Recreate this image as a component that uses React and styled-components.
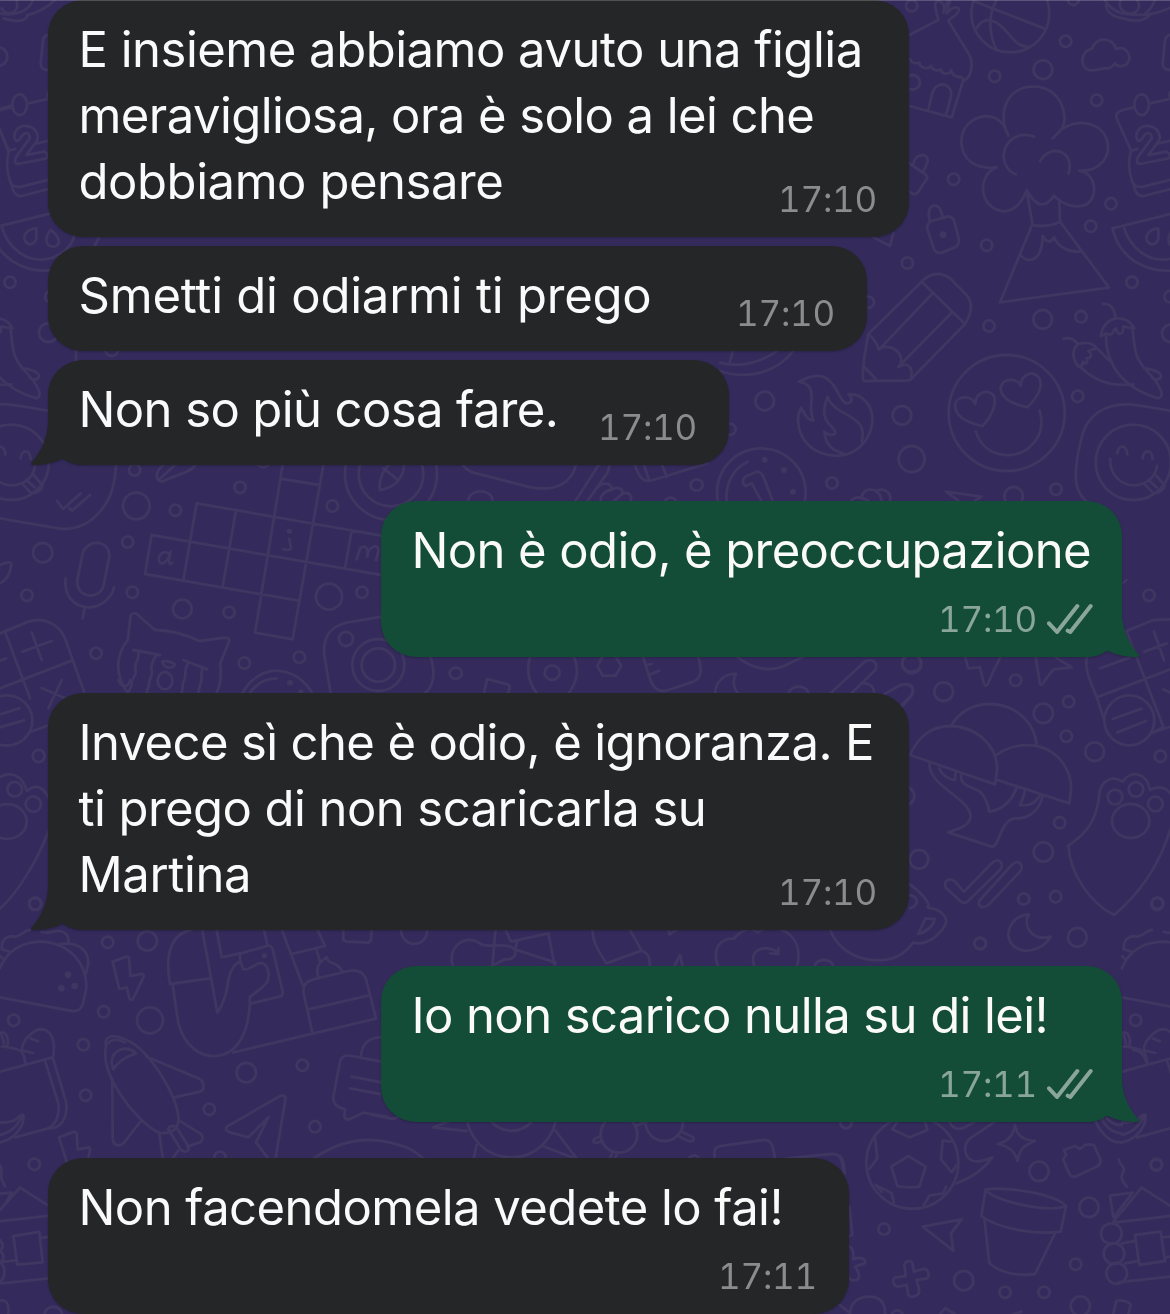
import React from 'react'
import styled, { createGlobalStyle } from 'styled-components'

const GlobalStyle = createGlobalStyle`
    body {
        margin: 0;
        background: #342b5c;
    }
`

const Screen = styled.main`
    position: relative;
    width: 1170px;
    height: 1314px;
    overflow: hidden;
    background: #342b5c;
    font-family: Inter, "Liberation Sans", sans-serif;
`

const Wallpaper = styled.svg`
    position: absolute;
    inset: 0;
    fill: none;
    stroke: #3f3661;
    stroke-width: 2.8px;
    stroke-linecap: round;
    stroke-linejoin: round;
    path, ellipse {
        vector-effect: non-scaling-stroke;
    }
    .dot {
        fill: #3f3661;
        stroke: none;
    }
`

const TopEdge = styled.div`
    position: absolute;
    top: 0;
    left: 0;
    right: 0;
    height: 1px;
    background: rgba(255, 255, 255, 0.2);
`

const Thread = styled.section`
    position: relative;
    display: flex;
    flex-direction: column;
    padding: 0 48px;
`

const Bubble = styled.article`
    position: relative;
    box-sizing: border-box;
    display: flex;
    flex-direction: ${p => p.$stacked ? 'column' : 'row'};
    justify-content: space-between;
    align-self: ${p => p.$mine ? 'flex-end' : 'flex-start'};
    width: ${p => p.$width}px;
    height: ${p => p.$stacked ? 156 : 39 + 66 * p.$rows}px;
    margin-top: ${p => p.$gap}px;
    padding: 17px 30px 0 30.5px;
    padding-bottom: ${p => p.$stacked ? 15 : 22}px;
    border-radius: 35px;
    background: ${p => p.$mine ? '#144d37' : '#242627'};
    color: #fafafa;
    filter: drop-shadow(0 1px 1px rgba(0, 0, 0, 0.22));
`

const Tail = styled.svg`
    position: absolute;
    z-index: -1;
    bottom: 0;
    width: 54px;
    height: 44px;
    ${p => p.$mine ? 'right: -18px; transform: scaleX(-1);' : 'left: -18px;'}
    fill: ${p => p.$mine ? '#144d37' : '#242627'};
`

const Message = styled.p`
    flex: 1;
    min-width: 0;
    margin: 0;
    font-size: 49px;
    line-height: 66px;
    white-space: nowrap;
`

const Line = styled.span`
    display: block;
    letter-spacing: ${p => p.$tracking}px;
`

const Meta = styled.div`
    display: flex;
    align-items: center;
    align-self: flex-end;
    gap: 10px;
    width: max-content;
    height: 30px;
    margin-right: ${p => p.$mine ? -1 : 2}px;
    margin-bottom: ${p => p.$stacked ? 8 : 1}px;
    color: ${p => p.$mine ? '#89a699' : '#8b8c8d'};
    svg {
        width: 46px;
        height: 31px;
        margin-top: -2px;
        fill: none;
        stroke: currentColor;
        stroke-width: 12;
        stroke-linecap: round;
        stroke-linejoin: round;
    }
`

const Time = styled.time`
    font-size: 35px;
    line-height: 30px;
    letter-spacing: -0.25px;
    font-variant-numeric: tabular-nums;
`

// calendar, phone and melon, drawn on both sides of the seam
const calendar = {
    x: 850, y: 0, sx: 1 / 3, sy: 1 / 3,
    d: `M975 102C950 105 945 110 944 130L938 190C938 205 945 210 960 210
        M967 295L900 310M850 322L820 330C800 335 795 345 802 360L843 452C835 480 835 510 845 540C850 560 865 562 880 560L990 532M843 452L862 447M920 432L990 415M850 550C855 580 865 590 880 588L990 560
        M862 420C852 400 870 375 895 378C925 380 935 410 925 425L895 465L950 455C960 460 962 470 955 475L870 492C860 490 858 480 865 470L905 415C905 395 890 395 880 410C875 422 865 425 862 420Z
        M990 635L787 685C810 780 890 812 950 812C1020 812 1095 770 1115 705M820 677C840 750 900 785 950 778C1000 772 1030 740 1040 705
        M925 685C905 685 885 700 890 720C900 740 920 735 925 715ZM968 690C998 710 1000 740 975 740C950 738 950 710 968 690
        M968 270C955 275 955 295 968 300`,
    rings: [[875, 314, 22, 31]]
}

// chillies and the sticker face, also repeated across the seam
const chilli = {
    x: 720, y: 250, sx: 1 / 3, sy: 1 / 3,
    d: `M1031 266C1060 260 1065 275 1075 282C1100 275 1120 280 1130 295C1150 310 1160 330 1175 335M1075 282C1050 300 1060 340 1082 353L1090 335C1095 345 1105 340 1100 325C1115 325 1118 312 1105 303L1130 295M1085 353C1120 390 1170 410 1240 403
        M1148 162C1180 160 1185 190 1186 205M1143 258C1145 225 1170 205 1195 205C1220 205 1235 220 1243 235L1210 230C1210 255 1195 260 1188 235C1178 240 1180 262 1160 250ZM1158 260C1160 340 1200 410 1315 445C1335 440 1325 410 1280 362C1240 320 1245 290 1238 240M1272 355C1300 355 1325 370 1323 380C1318 392 1300 390 1295 382
        M1400 492C1340 480 1290 470 1230 463C1150 460 1095 500 1083 570C1070 620 1060 690 1075 720C1085 745 1100 755 1120 770
        M1192 610C1195 580 1220 585 1222 613M1268 625C1270 598 1295 595 1298 627M1171 627C1168 670 1200 705 1240 706C1280 705 1308 680 1311 647M1272 700L1298 728C1315 735 1335 715 1333 705L1303 670M1285 690L1310 712`,
    rings: [[1240, 637, 113]]
}

// taco, bolt, rocket, plane, phone call, cake
const rocket = {
    x: 0, y: 900, sx: 1 / 3, sy: 1 / 3,
    d: `M0 205C20 150 70 125 125 125C215 130 265 200 258 270L250 305C245 330 230 335 215 333L0 292M5 145C5 115 25 105 45 110C60 110 75 90 90 90M125 95C145 105 160 90 180 93C200 97 207 110 205 127M180 132C235 125 265 150 265 190L258 220M5 148L28 155M0 168L10 178
        M338 185L380 170C388 170 388 175 388 185L391 228L425 222C432 222 432 228 430 232L400 295C395 303 388 300 387 290L380 262L358 267Z
        M200 785L177 712L223 695L230 700L233 748L268 742C273 745 270 750 265 775
        M0 515L158 472C162 470 160 455 162 440C160 390 125 375 95 400C75 415 65 435 65 455C75 470 75 480 75 487M65 455C45 440 25 445 10 438M92 415L114 424M68 452L100 459M135 482L175 610C180 650 165 675 145 685L45 712M158 472L198 605C205 650 185 675 165 683L145 686M0 727C40 720 75 680 70 645C60 640 55 655 45 660C30 668 15 668 0 668M0 705C40 695 55 670 66 650M0 400C20 385 30 430 20 440L5 440M5 405L12 430
        M318 440C310 400 350 405 380 420C450 450 540 600 535 660C535 690 510 700 480 700C400 660 300 520 318 440M335 490C335 445 380 435 408 460C375 470 350 490 340 508ZM325 430C335 415 360 418 375 428M440 470L595 535C615 545 615 570 600 575L520 593M337 535L338 715C340 740 360 740 372 728L425 660M535 660L600 700C610 705 610 720 600 727L562 740M505 688L540 745C550 762 570 755 565 738L528 680C515 675 505 680 505 688M478 702L488 772M535 752L520 772
        M680 680L840 588C855 583 858 590 855 605L825 785M680 680C675 690 680 693 690 697L745 712L805 652L768 727L812 785
        M510 252C495 170 510 100 575 90M510 252L630 235M605 80L652 338C665 320 680 290 685 240C690 210 705 190 720 185M518 255L535 370C555 440 600 470 645 468C710 465 750 400 750 290C790 260 812 250 805 215C800 190 785 185 770 193C750 205 735 212 730 207C722 190 718 170 722 160L805 137C812 135 815 140 818 148L848 275C850 285 845 288 838 290L755 310M648 80L665 172L720 160M790 80L802 135
        M700 457L1128 356L1100 245C1092 215 1070 207 1045 213L940 238C915 245 905 260 912 285L937 398M925 328L1108 286M955 232C945 200 960 185 980 172C985 185 985 185 1000 190C1015 195 1022 205 1028 215M842 80L912 265M875 162L975 138L948 80M950 150L960 185M1030 80L1030 120L1040 125L1105 128L1113 120L1115 80
        M1145 485L1050 467C1030 465 1022 475 1020 485L1000 590C998 610 1010 622 1035 628L1033 650C1038 662 1045 660 1055 655L1090 638L1160 650M1055 530L1145 547M1050 565L1140 582M1083 468C1085 430 1110 412 1145 412
        M935 780C1010 725 1080 715 1140 722C1210 735 1240 745 1280 785`,
    rings: [[105, 12, 18], [323, 127, 17], [442, 123, 29], [311, 335, 17], [41, 361, 17], [450, 361, 39], [250, 434, 17], [257, 586, 17], [739, 518, 29], [907, 496, 17], [628, 628, 17], [945, 680, 17], [660, 772, 17], [103, 793, 17]],
    dots: [[204, 224, 10], [184, 265, 10], [224, 258, 10], [793, 167, 8]]
}

const doodles = [
    calendar,
    { ...calendar, x: calendar.x - 1122 },
    chilli,
    { ...chilli, x: chilli.x - 1122 },
    rocket,
    { ...rocket, x: 1122 },
    // tree, volcano, house, ball
    {
        x: 850, y: 0, sx: 1 / 3, sy: 1 / 3,
        d: `M375 5L582 85M440 0C410 50 420 110 440 150M380 85C400 50 430 55 460 85C490 115 500 140 535 140
            M178 105L265 60C255 20 250 5 265 3C280 5 285 15 280 38C290 5 300 -10 300 3L290 40C310 15 330 20 326 32C320 50 300 55 295 62L355 160C372 185 365 230 345 240C335 235 330 225 332 232C320 230 305 228 303 210C300 225 275 225 273 208C265 215 245 210 243 198C235 210 210 205 208 188C200 192 185 190 180 178M340 240L305 352L178 318M235 330L248 275C262 240 310 250 303 290L288 345
            M765 0C775 20 800 40 830 42C880 48 910 45 965 22M768 15C770 40 790 50 820 56C850 65 880 65 900 45M812 0C800 30 830 40 840 40C865 40 875 15 860 0M915 0C905 20 895 35 885 42
            M765 205C750 205 735 215 715 210C690 200 690 155 727 145C735 110 790 110 798 147C830 135 845 170 835 185C825 205 800 200 795 190C785 205 775 205 765 205
            M475 407C440 340 470 258 553 260C630 262 660 345 635 388L608 415M635 388C690 350 770 370 774 440C774 490 730 515 687 512C740 520 745 590 710 613C680 628 640 615 612 587C600 605 585 615 570 613C550 605 535 580 530 570C520 600 495 635 460 634C385 625 380 525 440 502C380 510 335 480 334 425C335 365 390 340 430 352C455 360 465 380 475 407M552 410C490 385 440 450 470 500C478 515 488 520 498 523M570 484C600 430 675 450 656 520
            M530 572L548 675C575 680 600 680 630 665L628 605M545 678L450 907L777 863L630 665M512 765C530 790 560 780 570 755C578 735 578 720 578 708C585 722 600 735 612 712C625 740 650 755 690 755
            M233 690C228 675 235 668 245 663L290 650C300 648 308 652 312 662L327 718C328 730 322 738 315 742L275 758C262 760 256 755 252 748ZM240 665C225 610 265 605 273 635L280 655
            M178 490L225 522C235 530 232 535 228 540L205 575C198 585 190 585 178 575M190 492C195 460 235 455 233 485L220 515
            M70 712L120 738L130 700`,
        rings: [[481, 40, 117], [188, 247, 22], [185, 17, 17], [670, -2, 17], [647, 124, 17], [434, 229, 17], [579, 209, 28], [740, 301, 17], [311, 538, 17], [783, 611, 17], [722, 679, 17], [410, 736, 17], [172, 789, 17], [846, 847, 17]],
        dots: [[279, 704, 10]]
    },
    // pencil, flame, heart eyes, coin
    {
        x: 720, y: 250, sx: 1 / 3, sy: 1 / 3,
        d: `M432 393C425 390 430 330 445 252L605 95C630 70 660 65 690 85L740 135C760 160 755 190 735 222L580 380C575 390 570 392 560 392ZM605 95L735 222M638 130L478 298M695 188L535 350M445 252C460 265 475 285 475 298C510 275 560 310 538 350C560 335 580 350 573 380M432 350L470 390
            M237 395C300 360 330 380 355 430C370 460 380 465 393 455C397 440 390 435 385 433C430 430 460 470 457 515C450 580 400 620 345 617C280 615 235 570 234 510C234 495 240 480 243 473C255 495 262 510 280 512C262 470 285 440 270 415C262 400 250 398 237 395M425 575C440 520 400 505 365 485C340 470 325 455 323 440C308 480 310 500 325 520C345 540 350 548 343 552C330 560 320 550 313 545C315 570 325 600 370 610
            M787 528C740 518 705 500 705 465C710 435 755 435 766 462C765 430 800 415 820 435C835 460 810 505 787 528M922 472C870 460 840 440 842 412C850 380 895 385 902 408C902 375 935 360 955 380C975 405 950 445 922 472M768 545C790 620 880 635 930 590C965 560 970 520 959 482
            M83 635C40 655 15 700 20 755M110 665L75 680C65 690 68 705 78 708L95 700L125 755M110 665C120 663 125 670 130 680L157 750
            M0 338C60 355 130 335 175 300M0 363C80 390 170 370 222 300M40 300L30 335
            M395 750C410 735 430 745 445 752M425 742C430 715 460 710 480 735L485 752M470 722C500 710 515 735 510 752M678 725L785 740L765 752M678 725L715 752`,
        rings: [[860, 489, 174], [124, 728, 133], [807, 228, 17], [968, 208, 28], [1083, 200, 17], [1236, 97, 17], [134, 453, 28], [546, 496, 28], [1073, 439, 17], [575, 627, 39], [336, 699, 17], [881, 739, 28], [1008, 718, 17], [445, 157, 17], [30, 538, 17], [1352, 250, 26], [1350, 140, 17]],
        dots: [[134, 629, 9], [192, 660, 9], [219, 725, 9]]
    },
    // crossword, microphone, crying cat, camera
    {
        x: 0, y: 440, sx: 1 / 3, sy: 1 / 3,
        d: `M348 75C345 130 335 175 300 215C270 250 230 270 180 266L0 235M172 183L189 207L242 160M208 205L216 212L270 165
            M490 75C465 95 465 120 485 125L560 95C575 88 580 85 585 75M478 118L525 75
            M590 190L1145 287M590 190L550 420M455 285L1145 405M455 285L435 402L895 482M708 210L668 440M848 75L765 578L878 598L970 75M848 117L958 135M1055 272L1035 385
            M510 345C495 325 470 345 478 365C485 378 505 365 512 335C505 360 505 380 517 368M868 297L873 325C870 332 860 330 850 327M1070 358L1080 325C1095 315 1105 320 1102 350C1105 315 1140 310 1135 335L1128 360
            M246 350C252 295 330 295 328 350L312 430C305 485 225 475 232 420ZM197 415C190 470 225 500 265 502C300 503 335 475 342 442M254 505L248 535
            M0 375C15 368 30 365 33 370C35 395 20 420 0 430
            M0 580L85 545C130 530 175 550 195 595L252 755M15 575L90 775M0 745L215 662M95 577L125 660M68 635L155 603M0 662L18 655
            M380 755C345 700 345 650 383 600L392 528C395 518 405 518 410 522L465 570C520 570 560 585 598 603L675 593C688 593 690 600 685 610L660 672C665 700 662 735 650 758M400 630L480 645M415 640C420 660 400 665 407 690C412 710 390 715 395 735L385 758M468 645C460 665 450 670 455 690C460 710 445 715 447 735L440 758M550 660L622 688M565 668C550 690 560 700 553 720C545 730 550 745 545 758M607 688C600 710 610 715 600 735L595 758M487 665C500 660 525 670 525 675C515 688 490 685 487 665
            M725 765C750 710 800 692 830 692C880 695 915 720 940 765M750 758C770 730 800 715 830 715
            M1170 505L1145 530L1040 548C990 560 970 590 972 640L992 760`,
        rings: [[495, 722, 22, 26], [1135, 675, 78], [1135, 675, 50], [1173, 102, 138], [1173, 102, 97], [404, 90, 17], [720, 142, 17], [409, 198, 40], [526, 211, 17], [383, 306, 17], [128, 338, 29], [81, 466, 17], [397, 457, 17], [547, 507, 28], [687, 517, 17], [997, 198, 17], [987, 470, 39], [1086, 457, 17], [288, 640, 17], [733, 669, 17], [898, 652, 17], [1038, 597, 21], [790, 62, 20]],
        dots: [[868, 274, 8], [870, 728, 9], [903, 756, 8]]
    },
    // strip above the first reply
    {
        x: 370, y: 420, sx: 1 / 2.489, sy: 1 / 3,
        d: `M25 210C20 180 35 145 52 130M25 210C55 205 85 180 85 130M33 145L68 178M228 130C240 150 250 158 275 163L400 202C460 215 505 190 513 130M510 245L572 130M540 245L590 160C597 145 595 140 595 130M560 210C580 180 605 190 600 210C620 195 635 210 625 225C640 210 655 225 648 245M575 245C570 225 590 210 600 210M605 245L625 225M658 130C670 175 680 190 705 180L840 130M680 130L695 180M726 130L738 170`,
        rings: [[275, 240, 30, 26], [813, 195, 15, 17], [748, 250, 15, 17]]
    },
    // strip under the first reply
    {
        x: 370, y: 640, sx: 1 / 2.8, sy: 1 / 3,
        d: `M168 45C185 100 180 140 150 163M450 45C435 90 445 130 469 163M568 45C590 90 578 130 554 163M654 45L636 78L652 107L688 107L703 78L686 45M763 45L785 120C795 150 815 158 835 150L905 125C930 112 930 90 918 45M775 75L788 72M785 103L810 92M1022 45C1070 90 1120 95 1160 78L1222 45M967 163C965 130 990 100 1025 102C1015 120 1015 145 1034 163M1286 163L1385 65C1405 52 1425 70 1415 90L1345 163M1375 130C1400 125 1413 145 1412 163M1440 163L1480 138C1510 125 1530 145 1515 170L1485 205M318 165L328 117L385 133C395 138 390 145 385 165`,
        rings: [[240, 100, 17, 17], [510, 98, 21, 22], [1200, 160, 27, 20], [1517, 72, 27, 28]]
    },
    // mushrooms, ticks, paw, chocolate
    {
        x: 900, y: 580, sx: 1 / 3, sy: 1 / 3,
        d: `M195 230L205 265L240 262C245 280 250 315 257 318C265 318 265 300 302 230M407 230L420 312C425 318 430 312 432 305L460 268L515 262C515 258 480 245 466 230M0 315C40 305 50 330 25 355L0 380
            M30 525C60 460 100 440 150 438C230 440 300 500 290 580L285 613ZM155 435C185 385 230 372 275 372C350 375 405 430 410 495M285 527C330 495 370 492 405 497C480 510 520 580 512 640L508 670L292 600M88 552C90 620 200 650 212 705C213 735 180 745 145 757L275 800C300 800 300 720 345 715C385 718 420 690 428 648M183 585C180 620 220 620 240 635C260 655 265 675 267 695C305 690 335 665 350 622M118 565C125 585 145 598 165 600L167 575M375 630C372 650 365 665 360 675C390 680 410 665 420 645
            M135 915C135 895 155 895 165 905L192 935L275 850C295 830 315 850 300 870L205 962C195 972 188 970 180 962L145 930C137 925 135 920 135 915M240 960L335 855C355 835 375 855 360 875L265 975C245 990 230 975 240 960
            M505 797C560 760 590 720 597 650C600 600 635 585 668 605C690 570 740 575 750 630C775 615 800 625 812 640M505 797C510 880 570 970 642 1005C720 940 780 850 812 745
            M675 155L760 120L812 118M680 155L790 440L760 458M812 440L757 458M560 232C555 270 565 290 590 350L612 418M590 352L812 268M733 215L800 190M762 155L792 242M600 265L690 232M790 328L812 338M638 417L725 386M652 457L738 423M665 12L680 0
            M325 1060C330 1020 360 1005 387 1003C365 1040 400 1085 452 1070C435 1100 400 1115 370 1112C340 1105 325 1085 325 1060
            M28 945C55 950 60 975 30 985M28 912C60 935 85 960 88 985`,
        rings: [[688, 421, 75], [645, 651, 22], [708, 628, 22], [766, 672, 22], [692, 723, 56, 51], [747, 46, 17], [347, 301, 17], [35, 248, 28], [131, 335, 28], [506, 365, 17], [430, 400, 29], [499, 469, 17], [584, 515, 28], [781, 529, 17], [479, 728, 17], [430, 816, 29], [57, 838, 28], [15, 648, 28], [371, 957, 17], [467, 950, 17], [773, 970, 17], [532, 1072, 28], [240, 1091, 17]]
    },
    // strip above the second reply
    {
        x: 370, y: 900, sx: 1 / 2.412, sy: 1 / 3,
        d: `M75 85C72 145 140 150 138 85M200 200C185 140 230 100 265 130C280 145 310 130 340 140C360 155 350 180 325 178L290 200M303 85L295 200M325 85L340 125L430 100L446 200M355 125L350 148L448 188M537 85C535 120 545 140 570 190L655 152L625 85M655 152C672 160 675 175 675 200M720 85L722 103L740 90M733 200L748 165L754 200M840 200C825 150 840 115 880 115C885 100 900 92 915 85L935 97L950 85M985 85C1030 105 1040 150 1030 200M927 200C915 155 940 135 975 150L985 160M985 145L985 162L965 160
            M1108 85C1130 160 1190 190 1250 178C1280 172 1300 145 1310 128C1350 140 1385 90 1390 65C1388 40 1370 27 1345 22M1340 55L1362 57C1360 75 1345 95 1322 102Z`,
        rings: [[1095, 198, 22, 18], [1472, 130, 14, 17]]
    },
    // strip under the second reply
    {
        x: 370, y: 1105, sx: 1 / 3, sy: 1 / 3,
        d: `M0 28L60 40C75 42 80 40 85 35M360 45C395 88 455 88 490 45M290 78L190 67L245 45M320 120L310 165M555 75L622 163L518 123M797 62L832 50M693 95C665 100 665 115 680 113L698 110M935 80L970 97C975 108 965 110 955 108L922 92M728 140L718 165M742 142L733 165M1035 165C1030 130 1035 125 1060 122L1180 105C1205 105 1210 120 1215 165M1250 160L1385 147C1415 145 1418 170 1422 215M1410 45C1410 78 1448 78 1447 45`,
        rings: [[424, 22, 135], [747, 88, 55], [883, 52, 56], [972, 168, 17]]
    },
    // football, flower pot, cabin
    {
        x: 840, y: 1050, sx: 1 / 3, sy: 1 / 3,
        d: `M205 318L257 350L238 410Q205 415 172 408L154 350ZM172 215L157 238L208 262L262 240L255 215M332 275L308 272L303 328L335 367L350 345M105 265L112 325L88 357M107 405L155 430L162 458M107 405L125 425M318 410L310 430L268 437L250 468
            M328 212C335 240 360 240 375 232L410 212M470 212L390 265C365 290 375 325 400 333C420 338 440 328 457 322C430 360 390 385 350 400
            M525 225C530 255 545 270 585 273C550 285 538 300 533 333C525 305 510 290 473 282C505 275 520 255 525 225Z
            M672 300L705 288L720 297L735 285L750 283C765 283 765 290 768 300L782 330C783 340 778 345 770 350L705 380C692 382 688 375 685 365L670 330C668 322 678 318 678 315Z
            M437 418C500 410 640 430 678 468C620 490 450 450 437 418L424 498C480 540 600 555 662 545L678 468M433 505L448 640C475 665 530 680 585 672L645 550
            M248 530L365 508L333 550L340 602Z
            M193 645C195 632 215 630 217 640L222 665L250 657C265 655 270 675 262 685L230 690L238 722C238 740 210 745 205 735L200 705L175 710C160 710 155 690 165 683L197 678Z
            M28 590C40 595 42 610 40 628C60 620 80 625 74 640L45 650C60 670 60 690 48 690C38 692 35 692 28 685M28 470L37 555L28 558M0 318C10 330 12 340 14 370
            M30 792C30 755 60 738 95 740C125 745 135 760 135 792M0 765L30 790M300 792L315 775L345 792M520 792L545 785M820 792L828 755C835 748 865 752 872 765L865 792
            M837 328C835 345 860 350 850 365C840 380 845 390 860 410M820 502L810 437L878 428ZM820 515L905 413L995 470M820 518L990 498M845 580L885 573M855 640L895 633M835 697L990 680M885 555L962 545L975 633L898 645ZM970 562L990 560M975 622L990 620
            M765 210C785 260 820 280 846 277M785 205C800 240 830 250 846 250M800 205C820 225 830 225 846 225M847 65L870 58M880 0C905 0 915 20 920 38`,
        rings: [[217, 338, 138], [18, 218, 17], [597, 364, 29], [949, 345, 17], [747, 472, 29], [132, 537, 17], [707, 643, 17], [371, 692, 29], [495, 727, 17], [612, 727, 17], [721, 768, 29], [814, 551, 31], [822, 611, 31], [830, 670, 31], [172, 798, 17]]
    },
    // left margin, lower half
    {
        x: 0, y: 680, sx: 1 / 3, sy: 1 / 2.473,
        d: `M0 1200C10 1210 0 1225 5 1235L15 1252M0 1310L60 1255L145 1300M0 1338L145 1325M40 1375L118 1365L128 1440L52 1446ZM122 1380L145 1377M0 1385C10 1395 10 1405 0 1412C15 1420 12 1435 0 1440C18 1450 18 1475 0 1490M0 1440L45 1435M5 1492L145 1480M0 1535C20 1530 28 1545 25 1568M0 1270L35 1268L20 1290
            M0 85L58 70M0 117L72 100M92 128L145 112M125 20L195 45M185 0L145 70M355 0C365 20 385 20 390 0
            M0 240C30 225 70 235 80 275C105 255 130 265 145 290M145 375C110 450 50 530 0 565`,
        rings: [[20, 100, 77, 62], [116, 188, 18, 15], [44, 270, 22, 18], [100, 307, 23, 19], [22, 350, 58, 43], [106, 553, 18, 15], [160, 1570, 26, 20]]
    },
    // left margin, upper half
    {
        x: 0, y: 0, sx: 1 / 3, sy: 1 / 3,
        d: `M0 40C50 50 90 30 98 0M10 55C60 70 80 60 82 45M85 45C120 35 150 15 165 0M0 327L33 317M0 390L25 455M228 1050L228 1085M5 25C15 45 45 45 52 20L50 0`,
        rings: [[-6, 170, 28], [30, 847, 17], [152, 890, 17], [145, 998, 28], [335, 1048, 20]]
    }
]

const Doodle = ({ x, y, sx, sy, d, rings = [], dots = [] }) => (
    <g transform={`translate(${x} ${y}) scale(${sx} ${sy})`}>
        <path d={d} />
        {rings.map(([cx, cy, rx, ry = rx], i) => <ellipse key={i} cx={cx} cy={cy} rx={rx} ry={ry} />)}
        {dots.map(([cx, cy, r], i) => <circle className="dot" key={i} cx={cx} cy={cy} r={r} />)}
    </g>
)

// each line carries its own tracking
const messages = [
    {
        width: 861, gap: 0, time: '17:10',
        lines: [['E insieme abbiamo avuto una figlia', -0.5], ['meravigliosa, ora è solo a lei che', -0.57], ['dobbiamo pensare', -0.44]]
    },
    { width: 819, gap: 9, time: '17:10', lines: [['Smetti di odiarmi ti prego', -0.23]] },
    { width: 681, gap: 9, time: '17:10', tail: true, lines: [['Non so più cosa fare.', -0.6]] },
    { width: 741, gap: 36, time: '17:10', mine: true, tail: true, stacked: true, lines: [['Non è odio, è preoccupazione', -0.61]] },
    {
        width: 861, gap: 36, time: '17:10', tail: true,
        lines: [['Invece sì che è odio, è ignoranza. E', -0.63], ['ti prego di non scaricarla su', -0.56], ['Martina', -0.4]]
    },
    { width: 741, gap: 36, time: '17:11', mine: true, tail: true, stacked: true, lines: [['Io non scarico nulla su di lei!', -0.6]] },
    { width: 801, gap: 36, time: '17:11', stacked: true, lines: [['Non facendomela vedete lo fai!', -0.55]] }
]

const ReadMark = () => (
    <svg viewBox="440 66 138 93">
        <path d="M446 127L470 153L531 75M502 149L510 153L571 75" />
    </svg>
)

const ChatBubble = ({ width, gap, mine, tail, stacked, lines, time }) => (
    <Bubble $width={width} $gap={gap} $mine={mine} $stacked={stacked} $rows={lines.length}>
        {tail && (
            <Tail $mine={mine} viewBox="0 0 54 44">
                <path d="M18 0C18 17 11 31 1.5 41.5C0.5 43 1 44 3 44C14 44 24 42 33 37.5C39 42 46 44 54 44V0Z" />
            </Tail>
        )}
        <Message>
            {lines.map(([text, tracking]) => <Line key={text} $tracking={tracking}>{text}</Line>)}
        </Message>
        <Meta $mine={mine} $stacked={stacked}>
            <Time>{time}</Time>
            {mine && <ReadMark />}
        </Meta>
    </Bubble>
)

const App = () => (
    <Screen>
        <GlobalStyle />
        <Wallpaper width="1170" height="1314">
            {doodles.map((doodle, i) => <Doodle key={i} {...doodle} />)}
        </Wallpaper>
        <Thread>
            {messages.map((message, i) => <ChatBubble key={i} {...message} />)}
        </Thread>
        <TopEdge />
    </Screen>
)

export default App
